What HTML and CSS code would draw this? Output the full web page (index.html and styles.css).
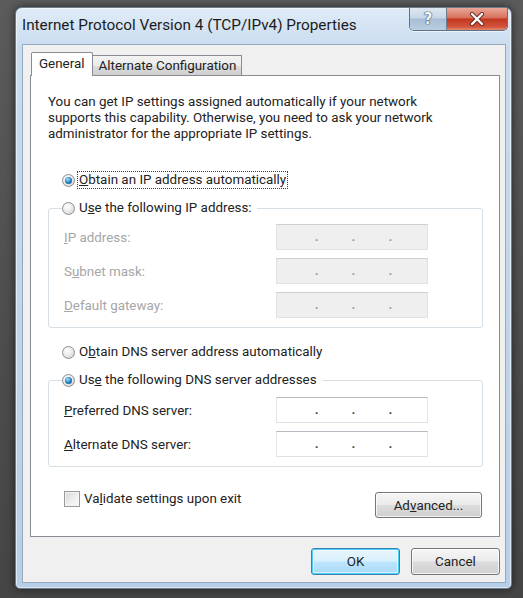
FILE: index.html
```html
<!DOCTYPE html>
<html>
<head>
<meta charset="utf-8">
<title>Internet Protocol Version 4 (TCP/IPv4) Properties</title>
<link rel="stylesheet" href="styles.css">
</head>
<body>
<div class="window">
  <div class="titlebar">
    <span class="title">Internet Protocol Version 4 (TCP/IPv4) Properties</span>
    <div class="caption">
      <div class="cap help"><span class="q">?</span></div>
      <div class="cap close">
        <svg width="16" height="14" viewBox="0 0 16 14">
          <path d="M3 2 L13 12 M13 2 L3 12" stroke="#6a2a20" stroke-width="4.2" stroke-linecap="round"/>
          <path d="M3 2 L13 12 M13 2 L3 12" stroke="#ffffff" stroke-width="2.4" stroke-linecap="round"/>
        </svg>
      </div>
    </div>
  </div>
  <div class="client">
    <div class="tabs">
      <div class="tab active">General</div>
      <div class="tab">Alternate Configuration</div>
    </div>
    <div class="panel">
      <p class="intro">You can get IP settings assigned automatically if your network<br>supports this capability. Otherwise, you need to ask your network<br>administrator for the appropriate IP settings.</p>

      <div class="opt first">
        <span class="radio on"></span>
        <span class="lbl focus"><u>O</u>btain an IP address automatically</span>
      </div>

      <fieldset class="group">
        <legend class="opt">
          <span class="radio"></span>
          <span class="lbl">U<u>s</u>e the following IP address:</span>
        </legend>
        <div class="fields">
          <span class="flabel disabled"><u>I</u>P address:</span>
          <span class="ipbox disabled"><i>.</i><i>.</i><i>.</i></span>
          <span class="flabel disabled">S<u>u</u>bnet mask:</span>
          <span class="ipbox disabled"><i>.</i><i>.</i><i>.</i></span>
          <span class="flabel disabled"><u>D</u>efault gateway:</span>
          <span class="ipbox disabled"><i>.</i><i>.</i><i>.</i></span>
        </div>
      </fieldset>

      <div class="opt dns">
        <span class="radio"></span>
        <span class="lbl">O<u>b</u>tain DNS server address automatically</span>
      </div>

      <fieldset class="group group2">
        <legend class="opt">
          <span class="radio on"></span>
          <span class="lbl">Us<u>e</u> the following DNS server addresses</span>
        </legend>
        <div class="fields">
          <span class="flabel"><u>P</u>referred DNS server:</span>
          <span class="ipbox"><i>.</i><i>.</i><i>.</i></span>
          <span class="flabel"><u>A</u>lternate DNS server:</span>
          <span class="ipbox"><i>.</i><i>.</i><i>.</i></span>
        </div>
      </fieldset>

      <div class="bottomrow">
        <div class="opt check">
          <span class="checkbox"></span>
          <span class="lbl">Va<u>l</u>idate settings upon exit</span>
        </div>
        <div class="btn adv">Ad<u>v</u>anced...</div>
      </div>
    </div>
    <div class="buttons">
      <div class="btn ok">OK</div>
      <div class="btn">Cancel</div>
    </div>
  </div>
</div>
</body>
</html>
```

FILE: styles.css
```css
html, body {
  margin: 0;
  padding: 0;
}
body {
  width: 523px;
  height: 598px;
  overflow: hidden;
  background: linear-gradient(#5b5b5b, #4c4c4c 60%, #454545);
  font-family: Roboto, "Open Sans", sans-serif;
  font-size: 13.4px;
  color: #222222;
  padding-top: 7px;
  box-sizing: border-box;
}

.window {
  margin-left: 15px;
  width: 497px;
  height: 582px;
  box-sizing: border-box;
  border: 1px solid #6d7d8e;
  border-radius: 7px 7px 5px 5px;
  background: linear-gradient(#e0ebf7, #c9dcf0 40px, #bdd3ea 70%, #b6cfe9);
  padding: 0 5px 5px 6px;
  display: flex;
  flex-direction: column;
  box-shadow: 0 0 8px rgba(0,0,0,0.55), inset 0 0 0 1px rgba(255,255,255,0.55);
}

.titlebar {
  height: 36px;
  display: flex;
  align-items: flex-start;
  flex: none;
}
.title {
  flex: 1;
  margin-top: 7px;
  line-height: 20px;
  font-size: 15.3px;
  color: #1c1c1c;
  white-space: nowrap;
}
.caption {
  display: flex;
  margin-right: -2px;
  border: 1px solid #5f7286;
  border-top: none;
  border-radius: 0 0 5px 5px;
  overflow: hidden;
  box-shadow: 0 1px 0 rgba(255,255,255,0.6);
}
.cap {
  height: 22px;
  display: flex;
  align-items: center;
  justify-content: center;
}
.help {
  width: 36px;
  background: linear-gradient(#dfe8f2, #c7d6e6 45%, #a9bed5 50%, #b9cde2);
  border-right: 1px solid #6f7f91;
}
.help .q {
  font-family: "DejaVu Sans", sans-serif;
  font-weight: bold;
  font-size: 15px;
  line-height: 18px;
  color: #f4f7fb;
  text-shadow: 0 0 1px #3a4656, 0 0 1px #3a4656, 0 0 1px #3a4656;
}
.close {
  width: 60px;
  background: linear-gradient(#e9a898, #d7705c 45%, #c3361d 50%, #d2533c 85%, #e08a6f);
}

.client {
  flex: 1;
  display: flex;
  flex-direction: column;
  background: #f0f0f0;
  border: 1px solid #97aabd;
  padding: 7px 5px 7px 7px;
}

.tabs {
  display: flex;
  align-items: flex-end;
  height: 24px;
  margin-bottom: -1px;
  padding-left: 1px;
  position: relative;
  z-index: 1;
  flex: none;
}
.tab {
  box-sizing: border-box;
  height: 21px;
  padding: 0 5px 0 6px;
  line-height: 19px;
  border: 1px solid #898c95;
  border-left: none;
  background: linear-gradient(#f3f3f3, #ebebeb 50%, #dddddd 51%, #cfcfcf);
  color: #222222;
  white-space: nowrap;
}
.tab.active {
  height: 24px;
  padding: 0 7px;
  line-height: 22px;
  border-left: 1px solid #898c95;
  border-bottom: none;
  background: #ffffff;
  border-radius: 2px 2px 0 0;
}

.panel {
  flex: 1;
  background: #ffffff;
  border: 1px solid #898c95;
  padding: 18px 16px 0 17px;
  display: flex;
  flex-direction: column;
}

.intro {
  margin: 0;
  line-height: 16px;
  white-space: nowrap;
}

.opt {
  display: flex;
  align-items: center;
  height: 18px;
  padding-left: 14px;
}
.opt.first {
  margin-top: 29px;
}
.opt.dns {
  margin-top: 15px;
}
.radio {
  width: 13px;
  height: 13px;
  box-sizing: border-box;
  border-radius: 50%;
  border: 1px solid #8d8f92;
  background: radial-gradient(circle at 40% 35%, #ffffff, #e6e6e6 55%, #c8c8c8);
  margin-right: 2px;
  display: flex;
  align-items: center;
  justify-content: center;
  flex: none;
}
.radio.on::after {
  content: "";
  width: 7px;
  height: 7px;
  border-radius: 50%;
  background: radial-gradient(circle at 40% 35%, #a9e2fb, #2c8fd0 45%, #0c4a7c 90%);
}
.lbl {
  border: 1px dotted transparent;
  padding: 0 1px;
  line-height: 16px;
  white-space: nowrap;
}
.lbl.focus {
  border-color: #3b3b3b;
}

.group {
  margin: 10px 0 0 0;
  padding: 7px 0 9px 13px;
  border: 1px solid #d5dfe5;
  border-radius: 3px;
  min-width: 0;
}
.group2 {
  padding-top: 8px;
}
.group legend.opt {
  padding: 0 3px 0 0;
}
.fields {
  margin-left: 2px;
  display: grid;
  grid-template-columns: 212px 152px;
  grid-auto-rows: 26px;
  row-gap: 8px;
  align-items: center;
}
.flabel {
  white-space: nowrap;
}
.flabel.disabled {
  color: #a6a6a6;
}
.ipbox {
  box-sizing: border-box;
  height: 26px;
  border: 1px solid #dfe3e8;
  border-top-color: #b5b9bf;
  background: #ffffff;
  display: flex;
  align-items: center;
  justify-content: center;
  gap: 33px;
  padding-bottom: 2px;
  padding-left: 3px;
}
.ipbox i {
  font-style: normal;
  font-weight: bold;
  color: #4a4a4a;
}
.ipbox.disabled {
  background: #efefef;
  border-color: #e2e2e2;
  border-top-color: #cfcfcf;
}
.ipbox.disabled i {
  color: #9c9c9c;
}

.bottomrow {
  margin-top: 23px;
  display: flex;
  align-items: flex-start;
}
.opt.check {
  padding-left: 16px;
  flex: 1;
}
.checkbox {
  width: 16px;
  height: 16px;
  box-sizing: border-box;
  border: 1px solid #9a9a9a;
  background: linear-gradient(135deg, #d8d8d8, #f0f0f0 60%, #fafafa);
  box-shadow: inset 0 0 0 1px #f4f4f4;
  margin-right: 2px;
  flex: none;
}

.btn {
  box-sizing: border-box;
  width: 89px;
  height: 27px;
  border: 1px solid #767676;
  border-radius: 3px;
  background: linear-gradient(#f6f6f6, #ebebeb 48%, #dcdcdc 52%, #d0d0d0);
  box-shadow: inset 0 0 0 1px rgba(255,255,255,0.75);
  display: flex;
  align-items: center;
  justify-content: center;
  color: #222222;
  flex: none;
}
.btn.adv {
  width: 107px;
  height: 26px;
  margin-top: 2px;
  margin-right: 1px;
}

.buttons {
  margin-top: 11px;
  display: flex;
  justify-content: flex-end;
  gap: 11px;
  flex: none;
}
.btn.ok {
  border-color: #3c7fb1;
  background: linear-gradient(#eaf6fd, #d9f0fc 48%, #bee6fd 52%, #a7d9f5);
  box-shadow: inset 0 0 0 1px #48d0f8, inset 0 0 0 2px rgba(255,255,255,0.6);
}
```
